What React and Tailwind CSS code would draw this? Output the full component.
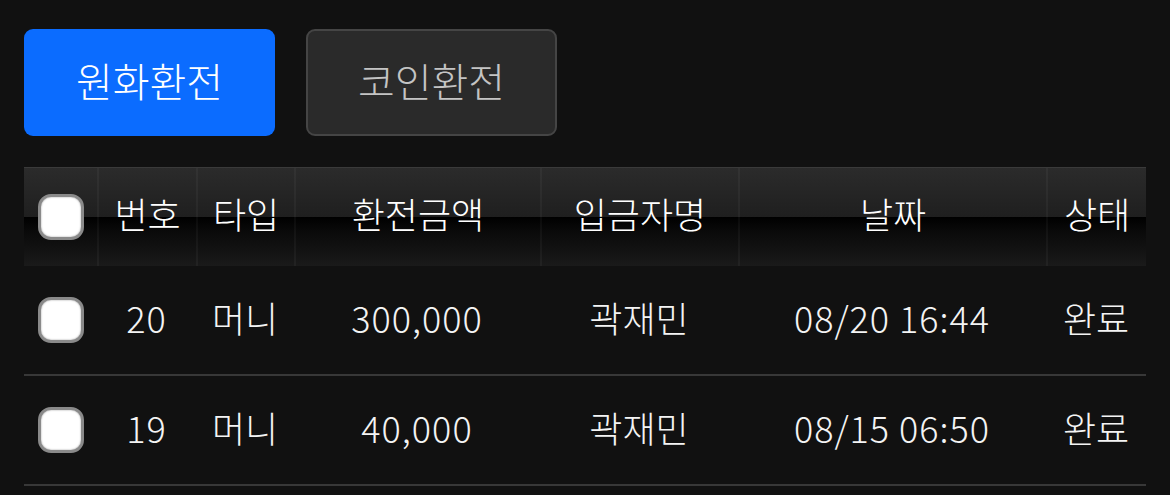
import React from "react";

const font = { fontFamily: '"Noto Sans CJK KR", "Noto Sans", sans-serif' };

function Check() {
  return (
    <div className="w-[46px] h-[46px] rounded-[13px] bg-white border-[3px] border-[#8a8a8a] shadow-[inset_0_0_2px_rgba(0,0,0,0.4)]" />
  );
}

const cols = ["w-[73px]", "w-[99px]", "w-[98px]", "w-[246px]", "w-[198px]", "w-[308px]", "w-[100px]"];
const heads = ["번호", "타입", "환전금액", "입금자명", "날짜", "상태"];
const rows = [
  ["20", "머니", "300,000", "곽재민", "08/20 16:44", "완료"],
  ["19", "머니", "40,000", "곽재민", "08/15 06:50", "완료"],
];
const numeric = [true, false, true, false, true, false];

export default function App() {
  return (
    <div className="w-[1170px] h-[495px] overflow-hidden bg-[#111111] text-white pt-[29px] pl-[24px] font-light" style={font}>
      <div className="flex gap-[31px]">
        <button className="w-[251px] h-[107px] rounded-[9px] bg-[#0b6cff] text-[40px] font-light text-white flex items-center justify-center pb-[6px]">
          <span className="leading-none">원화환전</span>
        </button>
        <button className="w-[251px] h-[107px] rounded-[9px] bg-[#2a2a2a] border-2 border-[#454545] text-[40px] font-light text-[#c4c4c4] flex items-center justify-center pb-[6px]">
          <span className="leading-none">코인환전</span>
        </button>
      </div>
      <div className="w-[1122px] mt-[31px]">
        <div className="flex h-[99px] border-t border-[#3a3a3a] bg-[linear-gradient(to_bottom,#2b2b2b_0%,#1f1f1f_50%,#000000_50%,#0a0a0a_65%,#1a1a1a_100%)] text-[36px]">
          <div className={`${cols[0]} flex items-center justify-center`}>
            <Check />
          </div>
          {heads.map((h, i) => (
            <div key={h} className={`${cols[i + 1]} flex items-center justify-center border-l-2 border-white/[0.04] pb-[8px]`}>
              <span className="leading-none">{h}</span>
            </div>
          ))}
        </div>
        {rows.map((r) => (
          <div key={r[0]} className="flex h-[110px] border-b-2 border-[#383838] text-[36px] text-[#f4f4f4]">
            <div className={`${cols[0]} flex items-center justify-center`}>
              <Check />
            </div>
            {r.map((c, i) => (
              <div key={i} className={`${cols[i + 1]} flex items-center justify-center pb-[6px]`}>
                <span className={numeric[i] ? "leading-none tracking-[1px]" : "leading-none"}>{c}</span>
              </div>
            ))}
          </div>
        ))}
      </div>
    </div>
  );
}
